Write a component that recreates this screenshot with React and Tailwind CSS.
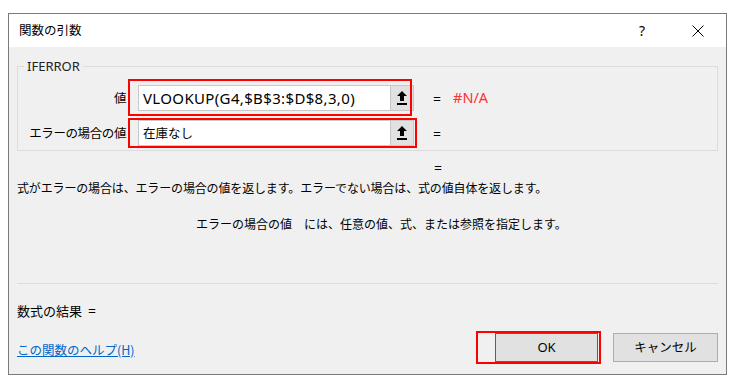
import React from 'react';

const jp = { fontFamily: '"Noto Sans CJK JP", "Noto Sans", sans-serif' };
const latin = { fontFamily: '"Noto Sans", "Noto Sans CJK JP", sans-serif' };

function RefButton() {
  return (
    <div className="w-[23px] h-full bg-[#e1e1e1] border-l border-[#c8c8c8] flex items-center justify-center">
      <svg width="12" height="16" viewBox="0 0 12 16">
        <path d="M6 1 L11 6 L8 6 L8 11 L4 11 L4 6 L1 6 Z" fill="#000" />
        <rect x="1" y="13" width="10" height="2" fill="#000" />
      </svg>
    </div>
  );
}

function ArgRow({ label, children }) {
  return (
    <div className="flex items-center h-[26px]">
      <div className="w-[108px] text-right text-[12.5px] leading-[16px] tracking-[-0.4px] text-black" style={jp}>
        {label}
      </div>
      <div className="ml-[12px] w-[276px] h-[26px] flex border border-[#c8c8c8] bg-white">
        <div className="flex-1 pl-[4px] flex items-center text-black whitespace-nowrap">
          {children}
        </div>
        <RefButton />
      </div>
    </div>
  );
}

export default function App() {
  return (
    <div className="w-[741px] h-[387px] bg-white pt-[13px] pl-[8px]" style={jp}>
      <div className="relative w-[719px] h-[362px] border border-[#7a7a7a] flex flex-col">
        {/* title bar */}
        <div className="h-[33px] bg-white flex items-center pl-[10px] text-[12.5px] text-black">
          <span>関数の引数</span>
          <span className="ml-auto mr-[47px] text-[14px]" style={latin}>?</span>
          <svg className="mr-[22px]" width="12" height="12" viewBox="0 0 12 12">
            <path d="M0.5 0.5 L11.5 11.5 M11.5 0.5 L0.5 11.5" stroke="#000" strokeWidth="1" />
          </svg>
        </div>

        {/* content */}
        <div className="flex-1 bg-[#f0f0f0] px-[8px] flex flex-col">
          <div className="relative mt-[19px] w-[701px] border border-[#dcdcdc] pt-[18px] pb-[4px] flex flex-col gap-[9px]">
            <span className="absolute -top-[9px] left-[6px] px-[3px] bg-[#f0f0f0] text-[13px] leading-[16px] text-[#222]" style={latin}>
              IFERROR
            </span>
            <div className="flex items-center">
              <ArgRow label="値">
                <span className="text-[15px] tracking-[0.35px]" style={latin}>VLOOKUP(G4,$B$3:$D$8,3,0)</span>
              </ArgRow>
              <span className="ml-[19px] text-[14px]" style={latin}>=</span>
              <span className="ml-[12px] text-[14.5px] text-[#ff3030]" style={latin}>#N/A</span>
            </div>
            <div className="flex items-center">
              <ArgRow label="エラーの場合の値">
                <span className="text-[12.5px]" style={jp}>在庫なし</span>
              </ArgRow>
              <span className="ml-[19px] text-[14px]" style={latin}>=</span>
            </div>
          </div>

          <div className="mt-[9px] h-[16px] leading-[16px] pl-[417px] text-[14px]" style={latin}>=</div>

          <div className="mt-[4px] h-[16px] leading-[16px] text-[12px] tracking-[-0.15px] text-black whitespace-nowrap">
            式がエラーの場合は、エラーの場合の値を返します。エラーでない場合は、式の値自体を返します。
          </div>
          <div className="mt-[20px] h-[16px] leading-[16px] pl-[179px] text-[12px] tracking-[0px] text-black whitespace-nowrap">
            エラーの場合の値　には、任意の値、式、または参照を指定します。
          </div>

          <div className="mt-[51px] h-px w-[701px] bg-[#dcdcdc]" />

          <div className="mt-[19px] h-[16px] leading-[16px] text-[13px] text-black flex items-center">
            <span>数式の結果</span>
            <span className="ml-[6px] text-[14px]" style={latin}>=</span>
          </div>

          <div className="mt-[14px] flex items-center">
            <a className="mt-[5px] text-[12.5px] text-[#0066cc] underline" style={jp}>
              この関数のヘルプ(H)
            </a>
            <div className="ml-auto flex gap-[15px]">
              <button className="w-[103px] h-[29px] bg-[#e1e1e1] border border-[#0078d7] text-[13px] text-black" style={latin}>
                OK
              </button>
              <button className="w-[105px] h-[29px] bg-[#e1e1e1] border border-[#adadad] text-[12.5px] text-black" style={jp}>
                キャンセル
              </button>
            </div>
          </div>
        </div>

        {/* red annotation boxes */}
        <div className="absolute left-[119px] top-[65px] w-[284px] h-[37px] border-2 border-[#ff0000]" />
        <div className="absolute left-[119px] top-[104px] w-[289px] h-[30px] border-2 border-[#ff0000]" />
        <div className="absolute left-[467px] top-[317px] w-[125px] h-[33px] border-2 border-[#ff0000]" />
      </div>
    </div>
  );
}
